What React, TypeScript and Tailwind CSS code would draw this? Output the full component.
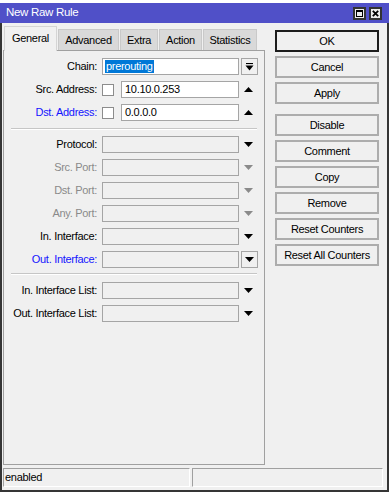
import type { ReactNode } from 'react'

const font = "font-['Liberation_Sans',Arial,sans-serif] text-[11px] tracking-[-0.3px]"

function Up() {
  return (
    <svg width="9" height="5" viewBox="0 0 9 5">
      <path d="M4.5 0L9 5H0Z" fill="#000" />
    </svg>
  )
}

function Down({ color = '#000' }: { color?: string }) {
  return (
    <svg width="9" height="5" viewBox="0 0 9 5">
      <path d="M0 0H9L4.5 5Z" fill={color} />
    </svg>
  )
}

function Row({ label, color = 'text-black', children, right }: { label: string; color?: string; children: ReactNode; right?: ReactNode }) {
  return (
    <div className="flex h-[17px] items-center">
      <div className={`w-[93px] whitespace-nowrap text-right ${color}`}>{label}</div>
      <div className="ml-[5px] flex h-full w-[137px] items-center">{children}</div>
      <div className="flex h-full w-[19px] items-center justify-center">{right}</div>
    </div>
  )
}

function Field({ white = false, children }: { white?: boolean; children?: ReactNode }) {
  return (
    <div className={`flex h-full flex-1 items-center border border-[#a5a5a5] pl-[2px] ${white ? 'bg-white' : 'bg-[#f0f0f0]'}`}>
      {children}
    </div>
  )
}

function DropBox({ children }: { children: ReactNode }) {
  return (
    <div className="ml-[1px] flex h-[17px] w-[17px] items-center justify-center border border-[#a5a5a5] bg-[#f0f0f0]">
      {children}
    </div>
  )
}

function Sep({ className = '' }: { className?: string }) {
  return <div className={`ml-[7px] w-[246px] border-t border-b border-t-[#c6c6c6] border-b-white ${className}`} />
}

function Btn({ label, primary = false, className = '' }: { label: string; primary?: boolean; className?: string }) {
  return (
    <div
      className={`flex h-[22px] w-[104px] items-center justify-center border-2 bg-[#f0f0f0] text-black ${
        primary ? 'border-[#1c1c1c]' : 'border-[#adadad]'
      } ${className}`}
    >
      {label}
    </div>
  )
}

const tabs = [
  { name: 'Advanced', w: 'w-[61px]' },
  { name: 'Extra', w: 'w-[38px]' },
  { name: 'Action', w: 'w-[43px]' },
  { name: 'Statistics', w: 'w-[54px]' },
]

export default function App() {
  return (
    <div className={`h-[495px] w-[391px] overflow-hidden bg-white pt-[3px] text-black ${font}`}>
      <div className="w-[389px]">
        <div className="flex h-[20px] items-center bg-[#5050c8] pl-[6px] pr-[7px] text-white">
          <span className="text-[11.5px]">New Raw Rule</span>
          <div className="ml-auto flex gap-[3px]">
            <div className="flex h-[13px] w-[13px] items-center justify-center border-2 border-[#333] bg-[#ececec]">
              <div className="h-[7px] w-[7px] border border-t-2 border-black" />
            </div>
            <div className="flex h-[13px] w-[13px] items-center justify-center border-2 border-[#333] bg-[#ececec]">
              <svg width="7" height="7" viewBox="0 0 7 7">
                <path d="M0.8 0.8L6.2 6.2M6.2 0.8L0.8 6.2" stroke="#000" strokeWidth="1.8" />
              </svg>
            </div>
          </div>
        </div>

        <div className="flex h-[469px] flex-col border-x-2 border-b-2 border-[#353535] bg-[#f0f0f0] pt-[3px]">
          <div className="flex">
            <div className="ml-[1px] flex w-[262px] flex-col">
              <div className="flex h-[24px] items-end pl-[1px]">
                <div className="relative z-10 mb-[-1px] flex h-[25px] w-[53px] items-center justify-center border border-b-0 border-[#d4d4d4] bg-[#f0f0f0] pb-[1px]">
                  General
                </div>
                {tabs.map((t) => (
                  <div
                    key={t.name}
                    className={`ml-[1px] flex h-[21px] items-center justify-center border border-b-0 border-[#c9c9c9] bg-[#d9d9d9] ${t.w}`}
                  >
                    {t.name}
                  </div>
                ))}
              </div>

              <div className="flex h-[415px] flex-col border border-[#a0a0a0] pt-[7px]">
                <div className="flex flex-col gap-[6px]">
                  <Row
                    label="Chain:"
                    right={
                      <DropBox>
                        <svg width="9" height="8" viewBox="0 0 9 8">
                          <path d="M1 0.5H8" stroke="#000" strokeWidth="1.2" />
                          <path d="M0.5 2.5H8.5L4.5 7.5Z" fill="#000" />
                        </svg>
                      </DropBox>
                    }
                  >
                    <Field white>
                      <span className="bg-[#0078d7] px-[1px] leading-[13px] text-white">prerouting</span>
                    </Field>
                  </Row>
                  <Row label="Src. Address:" right={<Up />}>
                    <div className="h-[12px] w-[12px] border border-[#8c8c8c] bg-white" />
                    <div className="ml-[7px] flex h-full flex-1">
                      <Field white>
                        <span className="pl-[1px]">10.10.0.253</span>
                      </Field>
                    </div>
                  </Row>
                  <Row label="Dst. Address:" color="text-[#1414ff]" right={<Up />}>
                    <div className="h-[12px] w-[12px] border border-[#8c8c8c] bg-white" />
                    <div className="ml-[7px] flex h-full flex-1">
                      <Field white>
                        <span className="pl-[1px]">0.0.0.0</span>
                      </Field>
                    </div>
                  </Row>
                </div>

                <Sep className="mt-[7px]" />

                <div className="mt-[6px] flex flex-col gap-[6px]">
                  <Row label="Protocol:" right={<Down />}>
                    <Field />
                  </Row>
                  <Row label="Src. Port:" color="text-[#8a8a8a]" right={<Down color="#8a8a8a" />}>
                    <Field />
                  </Row>
                  <Row label="Dst. Port:" color="text-[#8a8a8a]" right={<Down color="#8a8a8a" />}>
                    <Field />
                  </Row>
                  <Row label="Any. Port:" color="text-[#8a8a8a]" right={<Down color="#8a8a8a" />}>
                    <Field />
                  </Row>
                  <Row label="In. Interface:" right={<Down />}>
                    <Field />
                  </Row>
                  <Row
                    label="Out. Interface:"
                    color="text-[#1414ff]"
                    right={
                      <DropBox>
                        <Down />
                      </DropBox>
                    }
                  >
                    <Field />
                  </Row>
                </div>

                <Sep className="mt-[5px]" />

                <div className="mt-[7px] flex flex-col gap-[6px]">
                  <Row label="In. Interface List:" right={<Down />}>
                    <Field />
                  </Row>
                  <Row label="Out. Interface List:" right={<Down />}>
                    <Field />
                  </Row>
                </div>
              </div>
            </div>

            <div className="ml-[10px] mt-[4px] flex flex-col gap-[4px]">
              <Btn label="OK" primary />
              <Btn label="Cancel" />
              <Btn label="Apply" />
              <Btn label="Disable" className="mt-[6px]" />
              <Btn label="Comment" />
              <Btn label="Copy" />
              <Btn label="Remove" />
              <Btn label="Reset Counters" />
              <Btn label="Reset All Counters" />
            </div>
          </div>

          <div className="ml-[1px] mt-[3px] flex h-[19px] gap-[2px]">
            <div className="flex w-[187px] items-center border border-b-white border-r-white border-l-[#a0a0a0] border-t-[#a0a0a0] pl-[1px]">
              enabled
            </div>
            <div className="w-[191px] border border-b-white border-r-white border-l-[#a0a0a0] border-t-[#a0a0a0]" />
          </div>
        </div>
      </div>
    </div>
  )
}
